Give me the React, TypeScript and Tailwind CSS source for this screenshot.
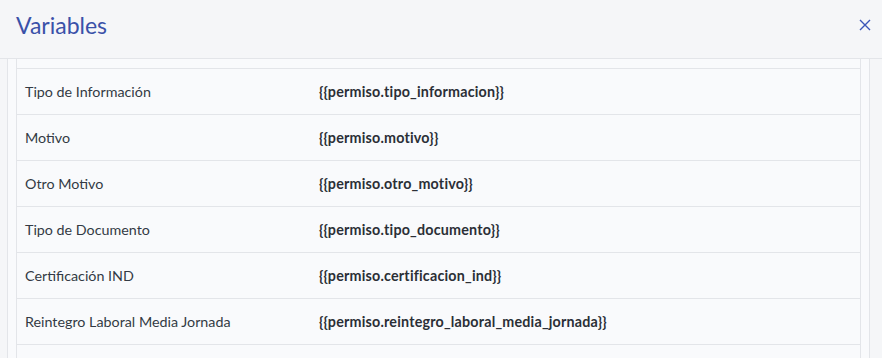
const rows: [string, string][] = [
  ["Tipo de Información", "{{permiso.tipo_informacion}}"],
  ["Motivo", "{{permiso.motivo}}"],
  ["Otro Motivo", "{{permiso.otro_motivo}}"],
  ["Tipo de Documento", "{{permiso.tipo_documento}}"],
  ["Certificación IND", "{{permiso.certificacion_ind}}"],
  ["Reintegro Laboral Media Jornada", "{{permiso.reintegro_laboral_media_jornada}}"],
  ["", ""],
];

export default function App() {
  return (
    <div
      className="w-[882px] h-[358px] overflow-hidden bg-[#f5f6f8] flex flex-col"
      style={{ fontFamily: "Lato, 'Noto Sans', sans-serif" }}
    >
      <div className="h-[59px] shrink-0 flex items-center justify-between pl-4 pr-[5px] pb-[8px] border-b border-[#e3e5e9]">
        <h2 className="text-[23px] text-[#3a51a8] leading-none">Variables</h2>
        <button className="w-6 h-6 flex items-center justify-center text-[#3a55b8]">
          <svg width="12" height="12" viewBox="0 0 12 12" fill="none" stroke="currentColor" strokeWidth="1.4">
            <path d="M1 1l10 10M11 1L1 11" />
          </svg>
        </button>
      </div>
      <div className="flex flex-1 min-h-0">
        <div className="w-2 shrink-0 border-r border-[#e3e5e9]" />
        <div className="flex-1 flex bg-[#f9fafc] border-r border-[#e3e5e9] pl-2">
          <div className="flex-1 border-l border-r border-[#e3e5e9]">
            <div className="h-[10px] border-b border-[#e3e5e9]" />
            {rows.map(([label, value], i) => (
              <div key={i} className="h-[46px] flex items-center border-b border-[#e3e5e9] text-[14.3px] text-[#333a44]">
                <div className="w-[302px] pl-2">{label}</div>
                <div className="font-bold text-[#2b2f36] tracking-[0.2px]">{value}</div>
              </div>
            ))}
          </div>
          <div className="w-2 shrink-0" />
        </div>
        <div className="w-3 shrink-0" />
      </div>
    </div>
  );
}
